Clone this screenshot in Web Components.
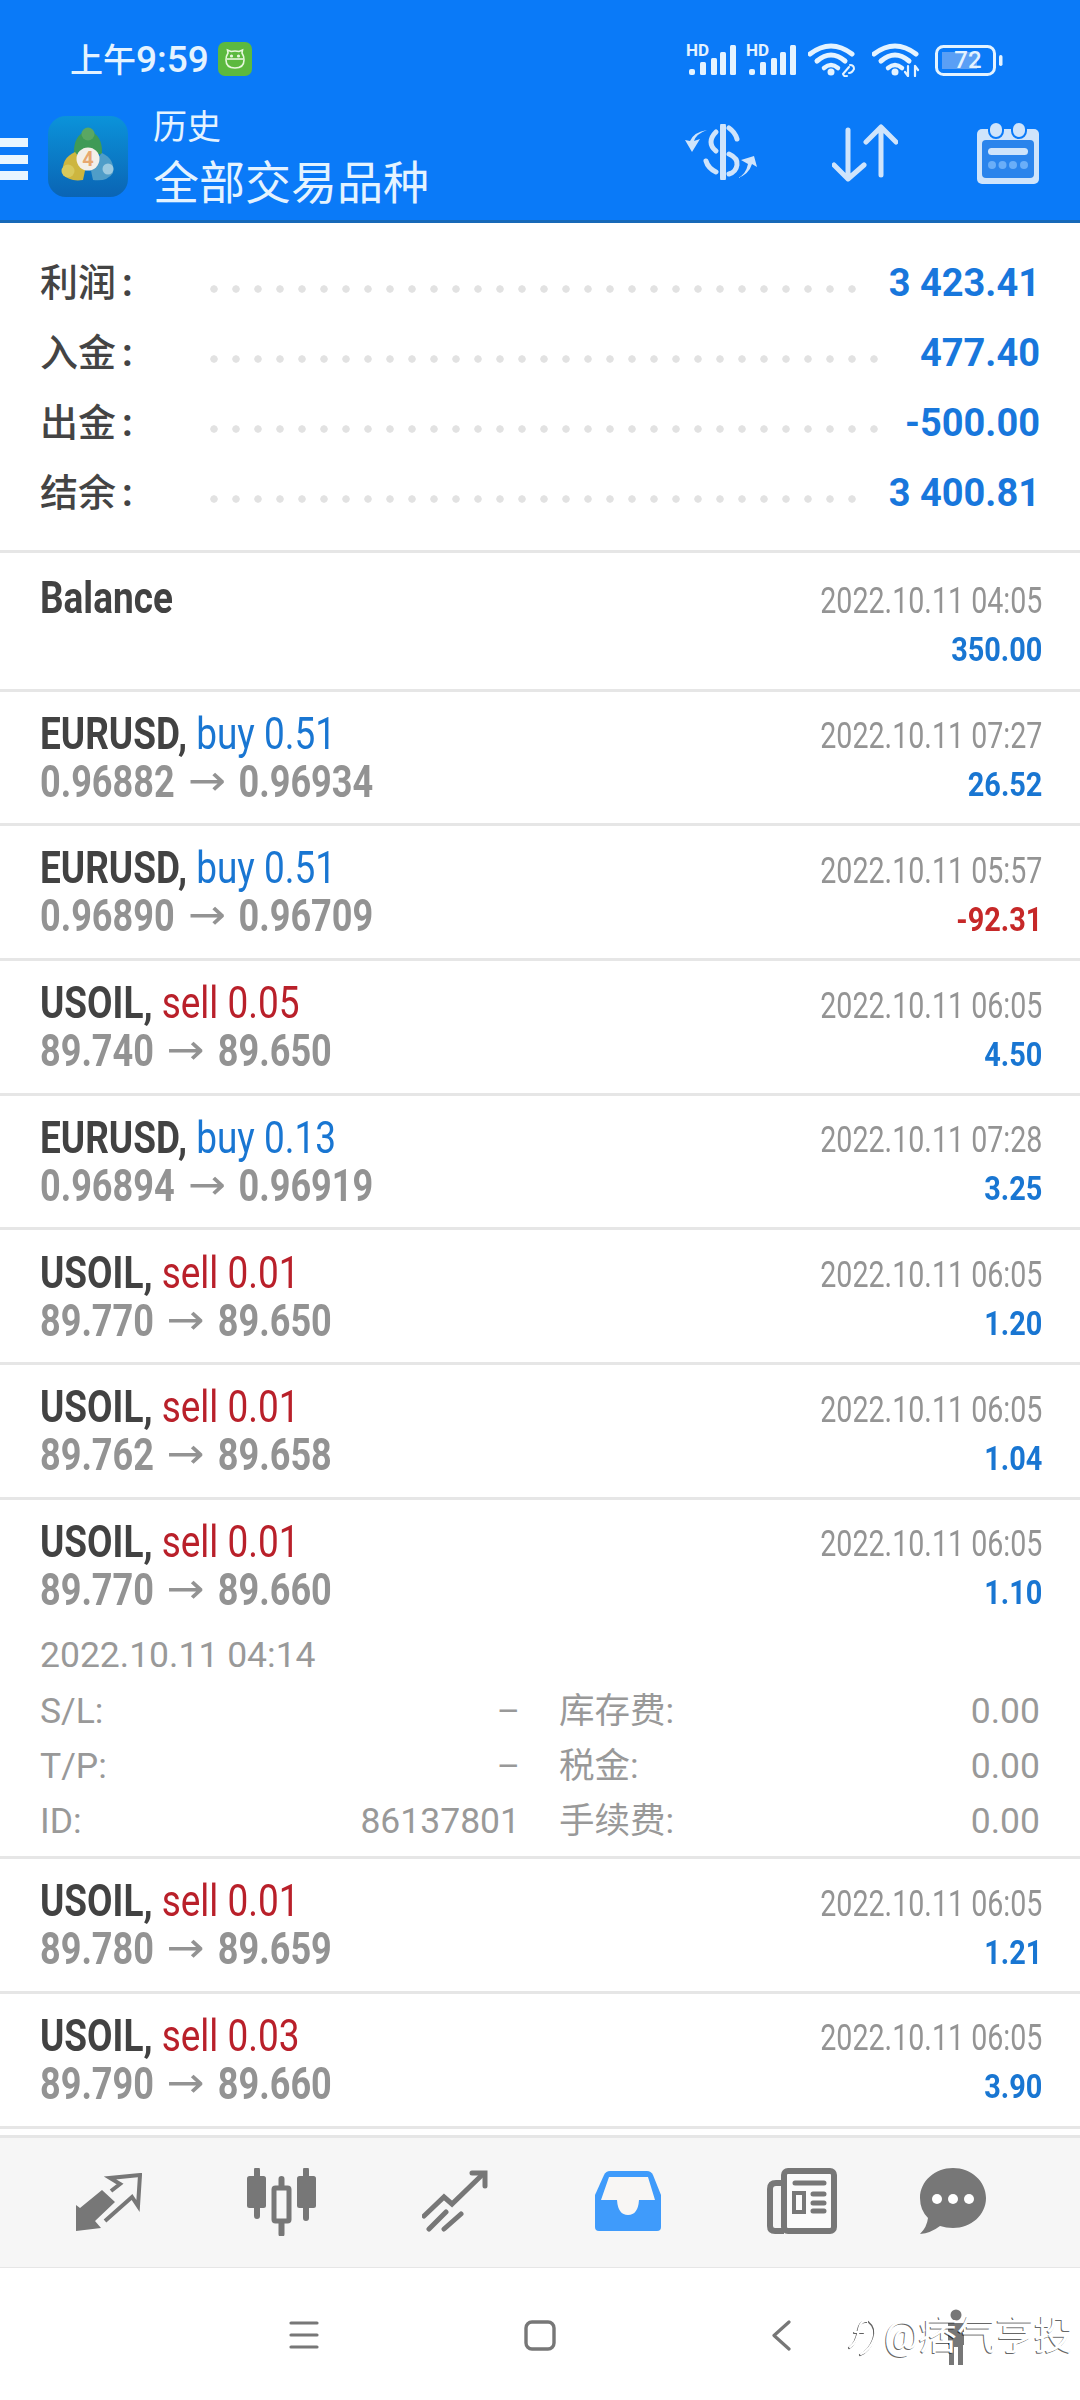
<!DOCTYPE html>
<html lang="zh">
<head>
<meta charset="utf-8">
<title>历史</title>
<style>
  html, body { margin: 0; padding: 0; background: #fff; }
  body { font-family: Roboto, "Noto Sans CJK SC", sans-serif; }
  trade-history { width: 1080px; height: 2400px; }
</style>
</head>
<body>
<trade-history>
  <app-header></app-header>
  <summary-panel>
    <summary-row dots="30" label="利润">3 423.41</summary-row>
    <summary-row dots="31" label="入金">477.40</summary-row>
    <summary-row dots="31" label="出金">-500.00</summary-row>
    <summary-row dots="30" label="结余">3 400.81</summary-row>
  </summary-panel>
  <deal-row balance symbol="Balance" time="2022.10.11 04:05" profit="350.00"></deal-row>
  <deal-row symbol="EURUSD" side="buy" lots="0.51" open="0.96882" close="0.96934" time="2022.10.11 07:27" profit="26.52"></deal-row>
  <deal-row symbol="EURUSD" side="buy" lots="0.51" open="0.96890" close="0.96709" time="2022.10.11 05:57" profit="-92.31"></deal-row>
  <deal-row symbol="USOIL" side="sell" lots="0.05" open="89.740" close="89.650" time="2022.10.11 06:05" profit="4.50"></deal-row>
  <deal-row symbol="EURUSD" side="buy" lots="0.13" open="0.96894" close="0.96919" time="2022.10.11 07:28" profit="3.25"></deal-row>
  <deal-row symbol="USOIL" side="sell" lots="0.01" open="89.770" close="89.650" time="2022.10.11 06:05" profit="1.20"></deal-row>
  <deal-row symbol="USOIL" side="sell" lots="0.01" open="89.762" close="89.658" time="2022.10.11 06:05" profit="1.04"></deal-row>
  <deal-row expanded symbol="USOIL" side="sell" lots="0.01" open="89.770" close="89.660" time="2022.10.11 06:05" profit="1.10">
    <deal-details opened="2022.10.11 04:14" order="86137801"></deal-details>
  </deal-row>
  <deal-row symbol="USOIL" side="sell" lots="0.01" open="89.780" close="89.659" time="2022.10.11 06:05" profit="1.21"></deal-row>
  <deal-row symbol="USOIL" side="sell" lots="0.03" open="89.790" close="89.660" time="2022.10.11 06:05" profit="3.90"></deal-row>
  <tab-bar></tab-bar>
  <nav-bar></nav-bar>
</trade-history>

<script>
// Page shell
class TradeHistory extends HTMLElement {
  constructor() {
    super();
    this.attachShadow({ mode: 'open' });
  }

  connectedCallback() {
    this.shadowRoot.innerHTML = `
      <style>
        :host {
          display: flex;
          flex-direction: column;
          overflow: hidden;
          background: #fff;
          font-family: Roboto, "Noto Sans CJK SC", sans-serif;
        }
      </style>
      <slot></slot>
    `;
  }
}

// Status bar and toolbar
class AppHeader extends HTMLElement {
  constructor() {
    super();
    this.attachShadow({ mode: 'open' });
  }

  connectedCallback() {
    this.shadowRoot.innerHTML = `
      <style>
        :host {
          display: block;
          height: 223px;
          box-sizing: border-box;
          background: #0a7af8;
          border-bottom: 3px solid #1769b8;
          color: #e4f3ff;
        }
        svg { display: block; flex: none; }
        .status {
          height: 100px;
          padding-top: 42px;
          box-sizing: border-box;
          display: flex;
          align-items: flex-start;
        }
        .clock {
          margin-left: 70px;
          font-size: 33px;
          line-height: 36px;
          font-weight: 500;
          width: 139px;
          white-space: nowrap;
        }
        .clock span { font-size: 37px; }
        .badge {
          margin-left: 9px;
          width: 34px;
          height: 34px;
          border-radius: 7px;
          background: #5cb93f;
          display: flex;
          align-items: center;
          justify-content: center;
        }
        .sys {
          margin-left: auto;
          margin-right: 77px;
          margin-top: 1px;
          display: flex;
          align-items: center;
          height: 34px;
        }
        .signal { margin-top: -8px; height: 42px; }
        .battery {
          position: relative;
          width: 68px;
          height: 31px;
          margin-left: 15px;
        }
        .battery span {
          position: absolute;
          left: 18px;
          top: 0;
          width: 30px;
          font: 500 24px/31px Roboto, sans-serif;
          text-align: center;
          color: #e4f3ff;
        }
        .bar {
          height: 120px;
          display: flex;
          align-items: center;
          position: relative;
        }
        .burger {
          width: 28px;
          height: 42px;
          display: flex;
          flex-direction: column;
          justify-content: space-between;
          align-self: flex-start;
          margin-top: 38px;
        }
        .burger i { display: block; height: 9px; background: #e8f6ff; }
        .logo {
          margin-left: 20px;
          align-self: flex-start;
          margin-top: 16px;
        }
        .titles { margin-left: 25px; align-self: flex-start; margin-top: 6px; }
        .sub { font-size: 34px; line-height: 42px; }
        .main { font-size: 46px; line-height: 58px; margin-top: 6px; white-space: nowrap; }
        .actions {
          margin-left: auto;
          margin-right: 41px;
          display: flex;
          align-items: flex-start;
          align-self: flex-start;
          margin-top: 24px;
        }
      </style>
      <div class="status">
        <div class="clock">上午<span>9:59</span></div>
        <div class="badge">
          <svg width="22" height="22" viewBox="0 0 22 22" fill="none" stroke="#e6f7dc" stroke-width="1.6">
            <path d="M4 5 3.5 2 7 3.5Q11 2.4 15 3.5L18.5 2 18 5Q20 8 20 12 20 20 11 20 2 20 2 12 2 8 4 5Z"/>
            <path d="M3 11H19"/>
            <circle cx="7.5" cy="8" r=".8"/><circle cx="14.5" cy="8" r=".8"/>
          </svg>
        </div>
        <div class="sys">
          ${this.signal()}
          <span style="width:8px"></span>
          ${this.signal()}
          <svg style="margin-left:11px" width="52" height="34" viewBox="0 0 52 34" fill="none" stroke="#e4f3ff" stroke-linecap="round">
            <path d="M2 11Q23-5 44 11" stroke-width="5"/>
            <path d="M9 18Q23 6 37 18" stroke-width="5"/>
            <path d="M16 25Q23 19 30 25" stroke-width="4.5"/>
            <circle cx="23" cy="29" r="3.5" fill="#e4f3ff" stroke="none"/>
            <path d="M35 31 41 24M39 33Q36 34 35 31M42 22Q46 22 46 26Q44 30 41 30" stroke-width="2"/>
          </svg>
          <svg style="margin-left:12px" width="48" height="34" viewBox="0 0 48 34" fill="none" stroke="#e4f3ff" stroke-linecap="round">
            <path d="M2 11Q23-5 44 11" stroke-width="5"/>
            <path d="M9 18Q23 6 37 18" stroke-width="5"/>
            <path d="M16 25Q23 19 30 25" stroke-width="4.5"/>
            <circle cx="23" cy="29" r="3.5" fill="#e4f3ff" stroke="none"/>
            <path d="M36 23V33M33 29 36 33M43 23V33M43 23 46 27" stroke-width="2.2"/>
          </svg>
          <div class="battery">
            <svg width="68" height="31" viewBox="0 0 68 31" fill="none">
              <rect x="1.5" y="1.5" width="58" height="28" rx="7" stroke="#e4f3ff" stroke-width="3"/>
              <rect x="7" y="7" width="35" height="17" fill="#5a9ff5"/>
              <rect x="64" y="10" width="3.5" height="11" rx="1.7" fill="#e4f3ff"/>
            </svg>
            <span>72</span>
          </div>
        </div>
      </div>
      <div class="bar">
        <div class="burger"><i></i><i></i><i></i></div>
        <svg class="logo" width="80" height="81" viewBox="0 0 80 81">
          <defs>
            <linearGradient id="lg" x1="0" y1="0" x2="0" y2="1">
              <stop offset="0" stop-color="#0b93da"/>
              <stop offset="1" stop-color="#0a64b4"/>
            </linearGradient>
          </defs>
          <rect width="80" height="81" rx="18" fill="url(#lg)"/>
          <path d="M26 38Q25 19 40 14 55 19 54 38Z" fill="#3f9a56"/>
          <circle cx="40" cy="18" r="6.5" fill="#5aa763"/>
          <path d="M15 58Q13 42 27 36L38 50 35 64Q21 66 15 58Z" fill="#cdb63f"/>
          <circle cx="20" cy="55" r="6.5" fill="#d8c95c"/>
          <path d="M65 57Q67 43 54 37L42 50 45 64Q59 66 65 57Z" fill="#4f9dc8"/>
          <circle cx="60" cy="53" r="5.5" fill="#9ccae0"/>
          <circle cx="40" cy="43" r="11.5" fill="#f3efe9"/>
          <text x="40" y="50" text-anchor="middle" font-family="Roboto, sans-serif" font-size="20" font-weight="700" fill="#e7a870">4</text>
        </svg>
        <div class="titles">
          <div class="sub">历史</div>
          <div class="main">全部交易品种</div>
        </div>
        <div class="actions">
          <svg width="74" height="56" viewBox="0 0 74 56" fill="none" stroke="#cfe4fb" stroke-width="5" stroke-linecap="round">
            <path d="M38 2V54" stroke-width="6"/>
            <path d="M31 8Q26 13 26 18T31 27"/>
            <path d="M44 4Q50 8 52 15"/>
            <path d="M44 30Q53 34 52 41T44 50"/>
            <path d="M21 37Q23 44 31 48"/>
            <path d="M22 6Q11 10 9 17L15 15 7 28 0 16 5 17Q9 8 22 6Z" fill="#cfe4fb" stroke="none"/>
            <path d="M53 54Q61 50 63 40L56 36 69 32 72 43 67 40Q64 50 53 54Z" fill="#cfe4fb" stroke="none"/>
          </svg>
          <svg style="margin-left:73px" width="66" height="58" viewBox="0 0 66 58" fill="none" stroke="#cfe4fb" stroke-width="5" stroke-linecap="round" stroke-linejoin="round">
            <path d="M16 6V54M2 41 16 55 32 41"/>
            <path d="M49 4V51M34 18 49 3 64 18"/>
          </svg>
          <svg style="margin-left:79px;margin-top:-4px" width="62" height="64" viewBox="0 0 62 64">
            <rect y="9" width="62" height="55" rx="5" fill="#cfe4fb"/>
            <rect x="5" y="20" width="52" height="38" rx="4" fill="#2a84ec"/>
            <rect x="12" y="2" width="14" height="16" rx="7" fill="#cfe4fb" stroke="#0a7af8" stroke-width="2"/>
            <rect x="35" y="2" width="14" height="16" rx="7" fill="#cfe4fb" stroke="#0a7af8" stroke-width="2"/>
            <rect x="11" y="28" width="40" height="7" rx="3.5" fill="#cfe4fb"/>
            <g fill="#6aaef8"><circle cx="15" cy="45" r="4"/><circle cx="25.500" cy="45" r="4"/><circle cx="36" cy="45" r="4"/><circle cx="47" cy="45" r="4"/></g>
          </svg>
        </div>
      </div>
    `;
  }

  signal() {
    return `
      <svg class="signal" width="52" height="42" viewBox="-1 -8 52 42" fill="#e4f3ff">
        <text x="0" y="13" font-family="Roboto, sans-serif" font-size="17" font-weight="700">HD</text>
        <rect x="3" y="26" width="6" height="6" rx="2"/>
        <rect x="14" y="19" width="6" height="13" rx="1.500"/>
        <rect x="25" y="15" width="6" height="17" rx="1.500"/>
        <rect x="34" y="9" width="6" height="23" rx="1.500"/>
        <rect x="44" y="2" width="6" height="30" rx="1.500"/>
      </svg>
    `;
  }
}

class SummaryPanel extends HTMLElement {
  constructor() {
    super();
    this.attachShadow({ mode: 'open' });
  }

  connectedCallback() {
    this.shadowRoot.innerHTML = `
      <style>
        :host {
          display: block;
          padding-top: 24px;
          padding-bottom: 23px;
          border-bottom: 3px solid #e6e6e6;
        }
      </style>
      <slot></slot>
    `;
  }
}

class SummaryRow extends HTMLElement {
  constructor() {
    super();
    this.attachShadow({ mode: 'open' });
  }

  connectedCallback() {
    const dots = Number(this.getAttribute('dots')) || 30;
    this.shadowRoot.innerHTML = `
      <style>
        :host {
          display: flex;
          align-items: center;
          height: 70px;
          padding: 0 40px;
        }
        .label {
          width: 170px;
          flex: none;
          margin-top: -5px;
          font-size: 38px;
          color: #444;
          font-weight: 500;
          white-space: nowrap;
        }
        .label span { margin-left: 6px; font-weight: 700; }
        .dots {
          width: ${dots * 22}px;
          height: 8px;
          margin-top: 14px;
          flex: none;
          background: radial-gradient(circle at 4px 4px, #e2e2e2 3.4px, transparent 4px) 0 0 / 22px 8px repeat-x;
        }
        .value {
          margin-left: auto;
          margin-top: 2px;
          font-size: 38px;
          font-weight: 700;
          color: #1877dc;
          white-space: nowrap;
        }
      </style>
      <div class="label">${this.getAttribute('label')}<span>:</span></div>
      <div class="dots"></div>
      <div class="value"><slot></slot></div>
    `;
  }
}

// One closed position in the list
class DealRow extends HTMLElement {
  constructor() {
    super();
    this.attachShadow({ mode: 'open' });
  }

  connectedCallback() {
    const symbol = this.getAttribute('symbol');
    const side = this.getAttribute('side');
    const lots = this.getAttribute('lots');
    const open = this.getAttribute('open');
    const close = this.getAttribute('close');
    const time = this.getAttribute('time');
    const profit = this.getAttribute('profit');
    const title = side
      ? `<b>${symbol},</b> <span class="${side}">${side} ${lots}</span>`
      : `<b>${symbol}</b>`;
    const prices = open ? `${open} <span class="arrow"><i>→</i></span> ${close}` : '';

    this.shadowRoot.innerHTML = `
      <style>
        :host {
          display: block;
          height: 134.7px;
          box-sizing: border-box;
          padding: 16.6px 38px 0 40px;
          border-bottom: 3px solid #e6e6e6;
        }
        :host([balance]) { height: 138.7px; padding-top: 20.6px; }
        :host([expanded]) { height: 359.500px; }
        .top { display: flex; justify-content: space-between; }
        .left { margin-top: 1.5px; }
        :host([balance]) .left { margin-top: 0; }
        .line {
          line-height: 48px;
          height: 48px;
          white-space: nowrap;
          transform-origin: left;
        }
        .title { font-size: 44px; transform: scaleX(.84); color: #424242; }
        .title b { font-weight: 700; }
        .buy { color: #1976d2; }
        .sell { color: #b9202a; }
        .prices { font-size: 44px; font-weight: 700; color: #939393; transform: scaleX(.82); }
        .arrow {
          display: inline-block;
          width: 56px;
          height: 40px;
          line-height: 40px;
          text-align: center;
          vertical-align: 2px;
          font-family: "DejaVu Sans", sans-serif;
          font-weight: 400;
          font-size: 42px;
        }
        .arrow i { display: inline-block; font-style: normal; transform: scaleX(1.32); }
        .right { margin-top: 3.900px; text-align: right; }
        .right .line { transform-origin: right; }
        .time { font-size: 36px; color: #949494; transform: scaleX(.795); }
        .profit { font-size: 34px; font-weight: 700; color: #1976d2; transform: scaleX(.85); }
        .loss { color: #c62828; }
      </style>
      <div class="top">
        <div class="left">
          <div class="line title">${title}</div>
          <div class="line prices">${prices}</div>
        </div>
        <div class="right">
          <div class="line time">${time}</div>
          <div class="line profit ${profit.startsWith('-') ? 'loss' : ''}">${profit}</div>
        </div>
      </div>
      <slot></slot>
    `;
  }
}

// Extra lines shown under an expanded position
class DealDetails extends HTMLElement {
  constructor() {
    super();
    this.attachShadow({ mode: 'open' });
  }

  connectedCallback() {
    const cell = (label, value) => `
      <div class="cell"><span>${label}</span><span>${value}</span></div>`;
    this.shadowRoot.innerHTML = `
      <style>
        :host {
          display: block;
          margin-top: 15px;
          margin-right: 2px;
          font-size: 35.500px;
          color: #999;
        }
        .opened {
          line-height: 48px;
          height: 48px;
          white-space: nowrap;
        }
        .grid {
          margin-top: 5px;
          display: grid;
          grid-template-columns: 480px 481px;
          column-gap: 39px;
        }
        .cell {
          display: flex;
          justify-content: space-between;
          line-height: 55px;
          height: 55px;
        }
      </style>
      <div class="opened">${this.getAttribute('opened')}</div>
      <div class="grid">
        ${cell('S/L:', '–')}${cell('库存费:', '0.00')}
        ${cell('T/P:', '–')}${cell('税金:', '0.00')}
        ${cell('ID:', this.getAttribute('order'))}${cell('手续费:', '0.00')}
      </div>
    `;
  }
}

class TabBar extends HTMLElement {
  constructor() {
    super();
    this.attachShadow({ mode: 'open' });
  }

  connectedCallback() {
    this.shadowRoot.innerHTML = `
      <style>
        :host {
          display: flex;
          flex: none;
          height: 133px;
          margin-top: 6px;
          padding-left: 22px;
          box-sizing: border-box;
          background: #f6f6f6;
          border-top: 3px solid #e6e6e6;
          border-bottom: 1px solid #e6e6e6;
          align-items: flex-start;
        }
        .tab {
          width: 173.400px;
          flex: none;
          display: flex;
          justify-content: center;
          padding-top: 30px;
        }
        .tab.last { margin-left: -23px; }
        svg { display: block; }
      </style>
      <div class="tab" style="padding-top:35px">
        <svg width="66" height="60" viewBox="0 0 66 60" fill="none" stroke="#777" stroke-width="4" stroke-linejoin="miter">
          <path d="M0 58V32L4 35 26 17 39 29 19 48 25 55Z" fill="#777" stroke="none"/>
          <path d="M35 18 44 11 34 5 64 2 62 33 56 24 29 48"/>
        </svg>
      </div>
      <div class="tab">
        <svg width="70" height="68" viewBox="0 0 70 68" fill="none" stroke="#777" stroke-linecap="round">
          <path d="M10 2V48M59 2V50M34.500 11V66" stroke-width="6"/>
          <rect y="8" width="19" height="32" rx="2.500" fill="#777" stroke="none"/>
          <rect x="50" y="8" width="19" height="32" rx="2.500" fill="#777" stroke="none"/>
          <rect x="27" y="20" width="15" height="33" rx="1.500" fill="#f6f6f6" stroke-width="5"/>
        </svg>
      </div>
      <div class="tab" style="padding-top:32px">
        <svg width="66" height="62" viewBox="0 0 66 62" fill="none" stroke="#777" stroke-width="5" stroke-linecap="round" stroke-linejoin="miter">
          <path d="M2 46 22 27 30 34 61 4"/>
          <path d="M50 3H63V16"/>
          <path d="M7 59 24 42M22 59 39 44"/>
        </svg>
      </div>
      <div class="tab" style="padding-top:33px">
        <svg width="67" height="60" viewBox="0 0 67 60">
          <path d="M15 0H52Q56 0 58 4L66 24V56Q66 60 62 60H4Q0 60 0 56V24L9 4Q11 0 15 0Z" fill="#3f9bfb"/>
          <path d="M14 6H53L60 29H44Q43 44 33 44T22 29H6Z" fill="#f8f6f4"/>
        </svg>
      </div>
      <div class="tab">
        <svg width="70" height="66" viewBox="0 0 70 66" fill="none" stroke="#777">
          <rect x="17" y="3" width="50" height="60" rx="4" fill="#fbfbfb" stroke-width="6"/>
          <path d="M14 15H9Q3 15 3 21V58Q3 63 8 63H17" stroke-width="6"/>
          <path d="M28 15H57M46 26H57M46 35H57M46 43H57" stroke-width="5" stroke-linecap="round"/>
          <rect x="27" y="25" width="10" height="19" stroke-width="4"/>
        </svg>
      </div>
      <div class="tab last">
        <svg width="66" height="66" viewBox="0 0 66 66">
          <path d="M33 0C51 0 66 13 66 30S51 60 33 60Q26 60 20 58 11 65 0 66 7 59 8 50 0 42 0 30C0 13 15 0 33 0Z" fill="#777"/>
          <g fill="#fff"><circle cx="17" cy="31" r="5"/><circle cx="33" cy="31" r="5"/><circle cx="49" cy="31" r="5"/></g>
        </svg>
      </div>
    `;
  }
}

class NavBar extends HTMLElement {
  constructor() {
    super();
    this.attachShadow({ mode: 'open' });
  }

  connectedCallback() {
    this.shadowRoot.innerHTML = `
      <style>
        :host {
          display: flex;
          flex: none;
          height: 130px;
          position: relative;
          background: #fff;
          padding: 53px 0 0 289px;
          box-sizing: border-box;
          align-items: flex-start;
        }
        svg { display: block; flex: none; }
        .mark {
          position: absolute;
          left: 848px;
          top: 45px;
          display: flex;
          align-items: center;
          color: #fff;
          font-size: 38.500px;
          line-height: 46px;
          white-space: nowrap;
          text-shadow: -1px 1px 0 rgba(0,0,0,.62);
        }
      </style>
      <svg width="30" height="28" viewBox="0 0 30 28" fill="none" stroke="#777" stroke-width="3.200" stroke-linecap="round">
        <path d="M2 2H28M2 14H28M2 26H28"/>
      </svg>
      <svg style="margin-left:205px;margin-top:-1px" width="32" height="31" viewBox="0 0 32 31" fill="none" stroke="#777" stroke-width="3.400">
        <rect x="2" y="2" width="28" height="27" rx="6"/>
      </svg>
      <svg style="margin-left:215px;margin-top:-1px" width="20" height="31" viewBox="0 0 20 31" fill="none" stroke="#777" stroke-width="3.200" stroke-linecap="round" stroke-linejoin="round">
        <path d="M18 2 3 15.500 18 29"/>
      </svg>
      <svg style="margin-left:155px;margin-top:-12px" width="20" height="56" viewBox="0 0 20 56" fill="#777">
        <circle cx="10" cy="6" r="5.500"/>
        <path d="M2 14H18V36H17V56H12V38H8V56H3V36H2Z"/>
      </svg>
      <div class="mark">
        <svg width="36" height="46" viewBox="0 0 36 46" fill="none" stroke="#fff" stroke-width="2.200" stroke-linecap="round" style="filter:drop-shadow(-1px 1px 0 rgba(0,0,0,.62))">
          <path d="M2 34Q9 30 11 16 13 7 19 8M7 19H16"/>
          <path d="M22 8Q30 14 26 26 22 37 13 41"/>
        </svg>
        <span>@痞气亨投</span>
      </div>
    `;
  }
}

customElements.define('trade-history', TradeHistory);
customElements.define('app-header', AppHeader);
customElements.define('summary-panel', SummaryPanel);
customElements.define('summary-row', SummaryRow);
customElements.define('deal-row', DealRow);
customElements.define('deal-details', DealDetails);
customElements.define('tab-bar', TabBar);
customElements.define('nav-bar', NavBar);
</script>
</body>
</html>
